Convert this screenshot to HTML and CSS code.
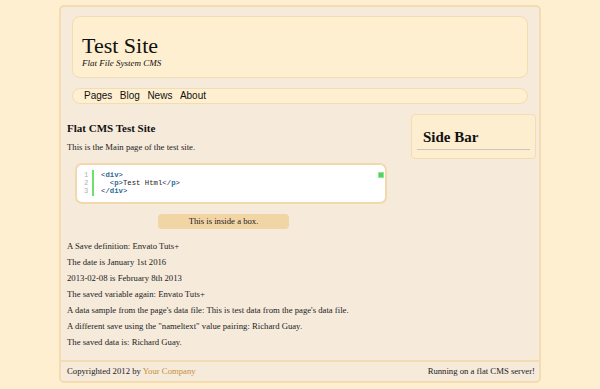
FILE: index.html
```html
<!DOCTYPE html>
<html>
<head>
<meta charset="utf-8">
<link rel="stylesheet" href="styles.css">
</head>
<body>
<div class="page">
  <header class="site-header">
    <h1 class="site-title">Test Site</h1>
    <div class="site-sub">Flat File System CMS</div>
  </header>
  <nav class="nav">
    <a href="#">Pages</a>
    <a href="#">Blog</a>
    <a href="#">News</a>
    <a href="#">About</a>
  </nav>
  <div class="content-row">
    <main class="main">
      <h2 class="main-title">Flat CMS Test Site</h2>
      <p class="intro">This is the Main page of the test site.</p>
      <div class="code">
        <span class="code-tool"></span>
        <div class="gutter"><div>1</div><div>2</div><div>3</div></div>
        <div class="code-lines">
          <div><span class="br">&lt;</span><b class="kw">div</b><span class="br">&gt;</span></div>
          <div>&nbsp;&nbsp;<span class="br">&lt;</span><b class="kw">p</b><span class="br">&gt;</span>Test Html<span class="br">&lt;/</span><b class="kw">p</b><span class="br">&gt;</span></div>
          <div><span class="br">&lt;/</span><b class="kw">div</b><span class="br">&gt;</span></div>
        </div>
      </div>
      <div class="inbox">This is inside a box.</div>
      <div class="lines">
        <p>A Save definition: Envato Tuts+</p>
        <p>The date is January 1st 2016</p>
        <p>2013-02-08 is February 8th 2013</p>
        <p>The saved variable again: Envato Tuts+</p>
        <p>A data sample from the page's data file: This is test data from the page's data file.</p>
        <p>A different save using the "nameltext" value pairing: Richard Guay.</p>
        <p>The saved data is: Richard Guay.</p>
      </div>
    </main>
    <aside class="sidebar">
      <h2 class="side-title">Side Bar</h2>
    </aside>
  </div>
  <footer class="footer">
    <span>Copyrighted 2012 by <a href="#">Your Company</a></span>
    <span>Running on a flat CMS server!</span>
  </footer>
</div>
</body>
</html>
```

FILE: styles.css
```css
* { box-sizing: border-box; }
html, body { margin: 0; padding: 0; }
body {
  background: #feefd1;
  font-family: "Liberation Serif", "Times New Roman", serif;
  color: #222;
  font-size: 8.7px;
}
.page {
  width: 482px;
  margin: 5px auto 0;
  border: 2px solid #f4dbb0;
  border-radius: 5px;
  background: #f6eadb;
  padding-top: 9px;
}
.site-header {
  margin: 0 11px;
  height: 62px;
  padding: 18px 9px 0;
  background: #feefd0;
  border: 1px solid #f2dcb3;
  border-radius: 8px;
}
.site-title {
  margin: 0;
  font-weight: normal;
  font-size: 22px;
  line-height: 22px;
  color: #111;
}
.site-sub {
  font-style: italic;
  font-size: 9px;
  line-height: 10px;
  margin-top: 1px;
  color: #111;
}
.nav {
  margin: 10px 11px 0;
  height: 16px;
  border: 1px solid #f2dcb3;
  border-radius: 8px;
  background: #feefd0;
  padding-left: 11px;
  display: flex;
  gap: 7.5px;
  align-items: center;
}
.nav a {
  font-family: "Liberation Sans", Arial, sans-serif;
  font-size: 10px;
  line-height: 14px;
  color: #111;
  text-decoration: none;
}
.content-row {
  display: flex;
  justify-content: space-between;
  padding: 0 3px 0 6px;
}
.main { width: 313px; }
.main-title {
  margin: 17px 0 0;
  font-size: 11px;
  line-height: 14px;
  font-weight: bold;
  color: #111;
}
.intro {
  margin: 4px 0 0;
  line-height: 16px;
}
.code {
  position: relative;
  margin: 8px -7px 0 8px;
  width: 312px;
  height: 41px;
  background: #fff;
  border: 2px solid #f3d8ad;
  border-radius: 7px;
  padding: 6px 0 0 7px;
  display: flex;
  font-family: "Liberation Mono", "Courier New", monospace;
  font-size: 7.3px;
  line-height: 8px;
}
.code-tool {
  position: absolute;
  top: 7px;
  right: 1px;
  width: 6px;
  height: 6px;
  background: #52d15c;
  border: 1px solid #8fe69a;
}
.gutter {
  width: 10px;
  color: #b0b0b0;
  border-right: 2px solid #6ce26c;
  margin-top: -1px;
  height: 26px;
  padding-top: 1px;
}
.code-lines {
  padding-left: 7px;
  color: #222;
}
.code-lines .br { color: #1a2a55; }
.code-lines .kw { color: #1f6d9a; font-weight: bold; }
.inbox {
  margin: 10px 0 0 91px;
  width: 131px;
  height: 15px;
  line-height: 15px;
  text-align: center;
  background: #f2d5a5;
  border-radius: 4px;
  color: #222;
}
.lines { margin-top: 9px; }
.lines p {
  margin: 0;
  line-height: 16px;
}
.sidebar {
  margin-top: 10px;
  width: 125px;
  height: 45px;
  background: #fdeecf;
  border: 1px solid #f2dcb3;
  border-radius: 4px;
  padding: 13px 5px 0;
  align-self: flex-start;
}
.side-title {
  margin: 0;
  font-size: 15px;
  line-height: 18px;
  font-weight: bold;
  color: #111;
  padding: 0 0 3px 6px;
  border-bottom: 1px solid #cbc5bb;
}
.footer {
  margin-top: 10px;
  border-top: 2px solid #f3dcb3;
  height: 21px;
  padding: 1px 4px 0 6px;
  display: flex;
  justify-content: space-between;
  line-height: 16px;
}
.footer a {
  color: #c8913e;
  text-decoration: none;
}
```
